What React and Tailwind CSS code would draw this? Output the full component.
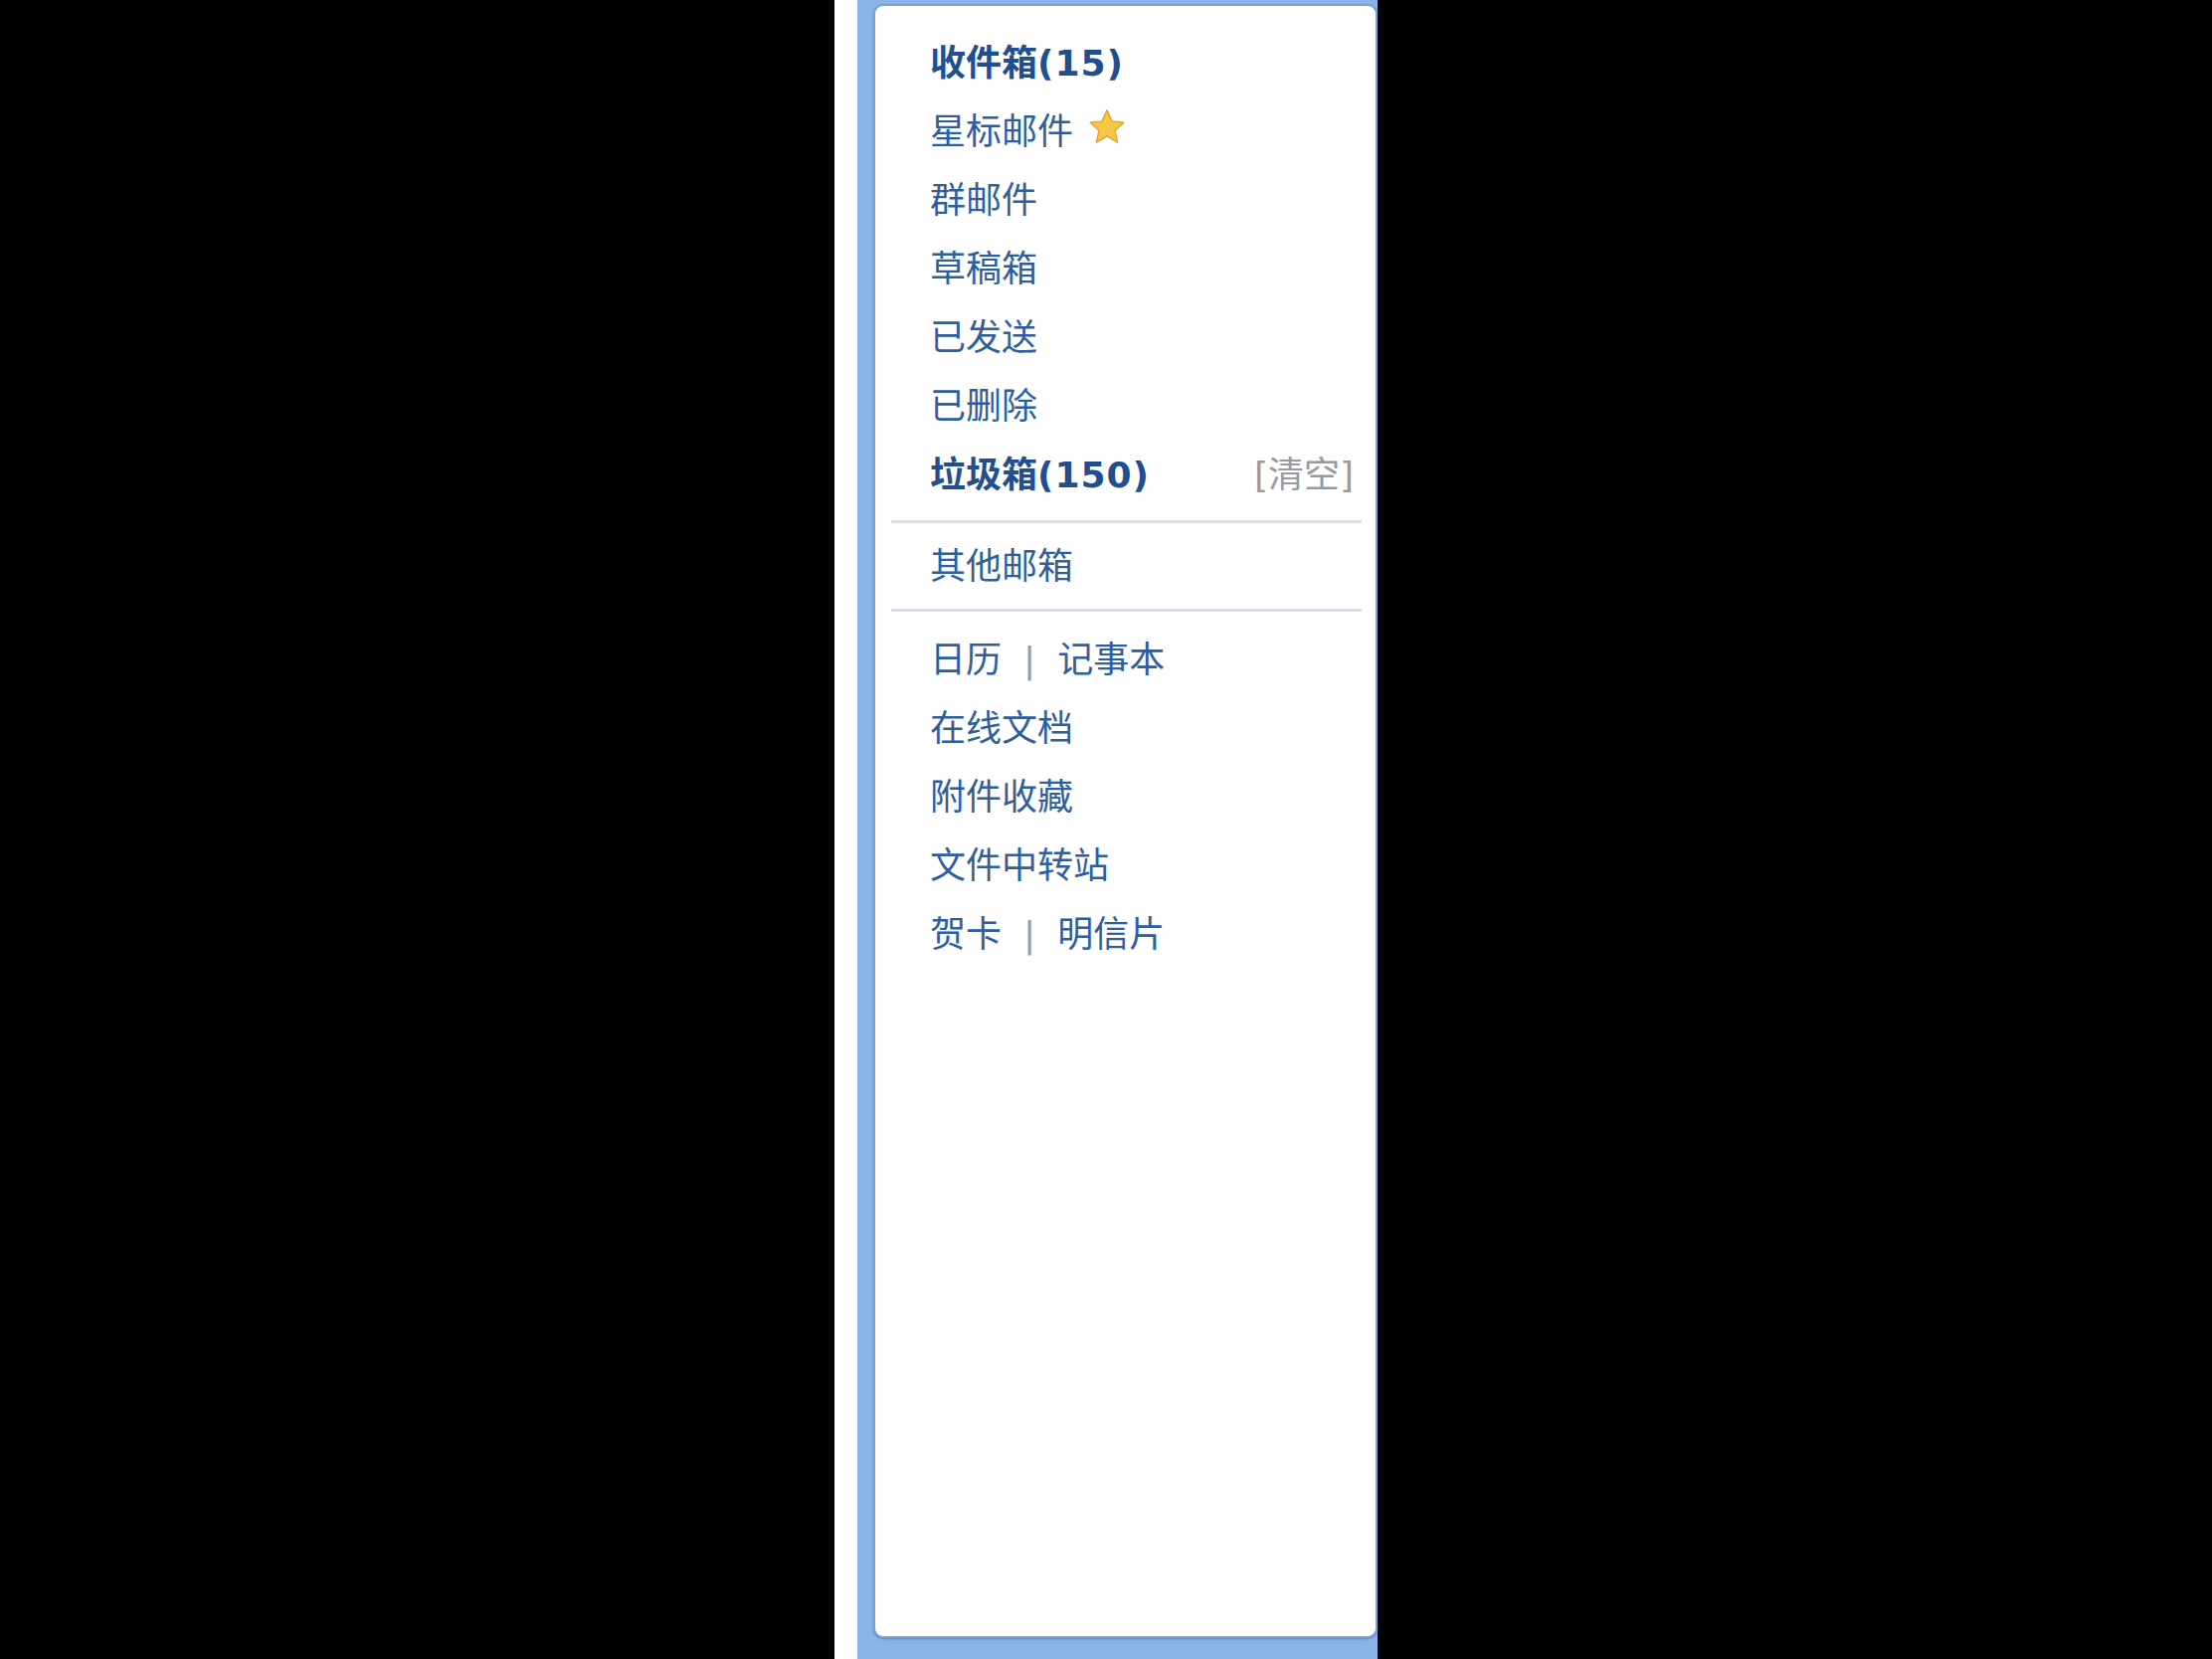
import React from "react";

const font = { fontFamily: '"DejaVu Sans", "Noto Sans CJK SC", sans-serif' };

function Star() {
  return (
    <svg width="42" height="42" viewBox="0 0 24 24" className="ml-[13px] -mt-[10px]">
      <path
        d="M12 2.2l2.9 6.3 6.8.7-5.1 4.6 1.5 6.8L12 17.1l-6.1 3.5 1.5-6.8-5.1-4.6 6.8-.7z"
        fill="#f7c744"
        stroke="#dca236"
        strokeWidth="0.8"
        strokeLinejoin="round"
      />
    </svg>
  );
}

function Row({ children, bold, className = "" }) {
  return (
    <div
      className={`h-[69px] flex items-center pl-[55px] text-[36px] ${
        bold ? "font-bold text-[#1f4f8f]" : "text-[#2f5e9e]"
      } ${className}`}
    >
      {children}
    </div>
  );
}

function Sep() {
  return <span className="mx-[22px] text-[#9a9a9a] text-[36px] leading-none">|</span>;
}

export default function App() {
  return (
    <div className="w-full h-[1668px] bg-black flex overflow-hidden" style={font}>
      <div className="ml-[839px] w-[546px] h-full flex">
        <div className="w-[23px] bg-white" />
        <div className="flex-1 bg-[#8ab4e7] pl-[16px] pt-[4px] pb-[21px] flex">
          <div className="flex-1 bg-white rounded-[10px] border-2 border-[#7aa2d8] shadow-[0_1px_2px_rgba(60,100,160,0.6)] pt-[23px] flex flex-col">
            <Row bold>
              收件箱<span className="tracking-[1px]">(15)</span>
            </Row>
            <Row>
              星标邮件
              <Star />
            </Row>
            <Row>群邮件</Row>
            <Row>草稿箱</Row>
            <Row>已发送</Row>
            <Row>已删除</Row>
            <div className="h-[69px] flex items-center justify-between pl-[55px] pr-[22px] text-[36px]">
              <span className="font-bold text-[#1f4f8f]">
                垃圾箱<span className="tracking-[1px]">(150)</span>
              </span>
              <span className="text-[#9a9a9a]">[清空]</span>
            </div>
            <div className="mt-[11px] ml-[16px] mr-[14px] h-[3px] bg-[#dcdfea]" />
            <Row className="mt-[9px]">其他邮箱</Row>
            <div className="mt-[8px] ml-[16px] mr-[14px] h-[3px] bg-[#dcdfea]" />
            <Row className="mt-[14px]">
              日历
              <Sep />
              记事本
            </Row>
            <Row>在线文档</Row>
            <Row>附件收藏</Row>
            <Row>文件中转站</Row>
            <Row>
              贺卡
              <Sep />
              明信片
            </Row>
          </div>
        </div>
      </div>
    </div>
  );
}
